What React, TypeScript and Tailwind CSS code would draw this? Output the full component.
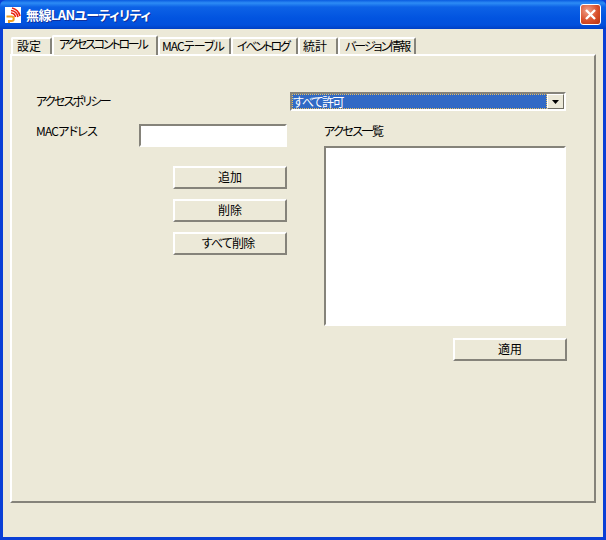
import { ReactNode } from "react";

const font = "[font-family:'Noto_Sans_CJK_JP','Liberation_Sans',sans-serif] [font-feature-settings:'palt']";

/* ================= XP BUTTON ================= */
function XpButton({ label, tight = "" }: { label: string; tight?: string }) {
  return (
    <button
      className={`w-[114px] h-[23px] flex items-center justify-center bg-[#ece9d8] border-t-2 border-l-2 border-t-white border-l-white border-r-2 border-b-2 border-r-[#85837a] border-b-[#85837a] text-[12px] leading-none text-black pb-[2px] whitespace-nowrap ${tight}`}
    >
      {label}
    </button>
  );
}

/* ================= SUNKEN BOX ================= */
function Sunken({ className, children }: { className: string; children?: ReactNode }) {
  return (
    <div className={`${className} border-t-2 border-l-2 border-t-[#85837a] border-l-[#85837a] border-r-2 border-b-2 border-r-white border-b-white`}>
      {children}
    </div>
  );
}

/* ================= TAB ================= */
function Tab({ label, className, active }: { label: string; className: string; active?: boolean }) {
  const base =
    "flex items-center bg-[#ece9d8] border-t-2 border-l-2 border-t-white border-l-white border-r-2 border-r-[#85837a] rounded-t-[2px] text-[12px] leading-none text-black whitespace-nowrap";
  if (active) {
    return <div className={`${base} h-[20px] -mb-px z-10 pb-[4px] ${className}`}>{label}</div>;
  }
  return <div className={`${base} h-[17px] pb-px ${className}`}>{label}</div>;
}

/* ================= MAIN ================= */
export default function App() {
  return (
    <div className={`${font} w-[606px] h-[540px] flex flex-col bg-[#0a3fd6] overflow-hidden`}>
      {/* title bar */}
      <div className="h-[29px] shrink-0 flex items-center pl-[5px] pr-[5px] rounded-t-[6px] bg-[linear-gradient(to_bottom,#0a5be0_0px,#2d8cf5_3px,#0d62e6_7px,#0254e0_18px,#0250dc_25px,#0140c4_29px)]">
        <svg width="16" height="16" viewBox="0 0 16 16" className="shrink-0">
          <rect x="0" y="0" width="16" height="16" fill="#fff" />
          <path d="M1.5 9.5h5a2.2 2.2 0 0 1 0 4.5H4v2" fill="none" stroke="#f0a020" strokeWidth="2" />
          <path d="M6 6a5 5 0 0 1 4.5 4M6 3.5a8 8 0 0 1 7 6.5M7 1a11 11 0 0 1 8 8" fill="none" stroke="#e82010" strokeWidth="1.6" />
        </svg>
        <span className="ml-[5px] text-[13px] font-bold leading-none text-white tracking-[-0.6px] [text-shadow:1px_1px_0_#0f2f9a]">
          無線LANユーティリティ
        </span>
        <div className="ml-auto w-[21px] h-[21px] flex items-center justify-center rounded-[3px] border border-white bg-[radial-gradient(circle_at_35%_30%,#f0a08a,#d9502c_55%,#b8320f)]">
          <svg width="13" height="13" viewBox="0 0 13 13">
            <path d="M2 2l9 9M11 2l-9 9" stroke="#fff" strokeWidth="2.4" />
          </svg>
        </div>
      </div>

      {/* client area */}
      <div className="flex-1 mx-[3px] mb-[3px] bg-[#ece9d8] flex flex-col pl-[7px] pr-[7px] pt-[6px]">
        <div className="flex items-end h-[19px] pl-px relative">
          <Tab label="設定" className="w-[41px] pl-[4px]" />
          <Tab label="アクセスコントロール" className="w-[106px] pl-[5px] tracking-[-2.2px]" active />
          <Tab label="MACテーブル" className="w-[73px] pl-[2px] tracking-[-0.9px]" />
          <Tab label="イベントログ" className="w-[67px] pl-[4px] tracking-[-2.3px]" />
          <Tab label="統計" className="w-[40px] pl-[3px]" />
          <Tab label="バージョン情報" className="w-[78px] pl-[5px] tracking-[-2px]" />
        </div>

        {/* tab panel */}
        <div className="h-[449px] w-[586px] border-t-2 border-l-2 border-t-white border-l-white border-r-2 border-b-2 border-r-[#85837a] border-b-[#85837a] pt-[36px] pl-[24px] flex gap-[3px]">
          {/* left column */}
          <div className="w-[251px] flex flex-col text-[12px] text-black leading-none">
            <div className="h-[19px] flex items-center pb-[2px] tracking-[-1.75px]">アクセスポリシー</div>
            <div className="flex items-start justify-between mt-[13px]">
              <span className="pt-[1px] tracking-[-0.8px]">MACアドレス</span>
              <Sunken className="w-[148px] h-[23px] bg-white" />
            </div>
            <div className="flex flex-col items-end gap-[10px] mt-[19px]">
              <XpButton label="追加" />
              <XpButton label="削除" />
              <XpButton label="すべて削除" tight="tracking-[-0.8px] pr-[4px]" />
            </div>
          </div>

          {/* right column */}
          <div className="w-[277px] flex flex-col text-[12px] text-black leading-none">
            <Sunken className="w-[276px] h-[19px] bg-white flex">
              <div className="flex-1 h-full bg-[#316ac5] border border-dotted border-[#e8c060] text-white flex items-center tracking-[-1.3px] whitespace-nowrap">
                すべて許可
              </div>
              <div className="w-[17px] h-full flex items-center justify-center bg-[#ece9d8] border-t border-l border-t-white border-l-white border-r border-b border-r-[#716f64] border-b-[#716f64]">
                <svg width="7" height="4" viewBox="0 0 7 4">
                  <path d="M0 0h7L3.5 4z" fill="#000" />
                </svg>
              </div>
            </Sunken>
            <div className="ml-[34px] mt-[14px] h-[21px] tracking-[-1.5px] whitespace-nowrap">アクセス一覧</div>
            <Sunken className="ml-[34px] w-[242px] h-[180px] bg-white" />
            <div className="ml-[163px] mt-[12px]">
              <XpButton label="適用" />
            </div>
          </div>
        </div>
      </div>
    </div>
  );
}
